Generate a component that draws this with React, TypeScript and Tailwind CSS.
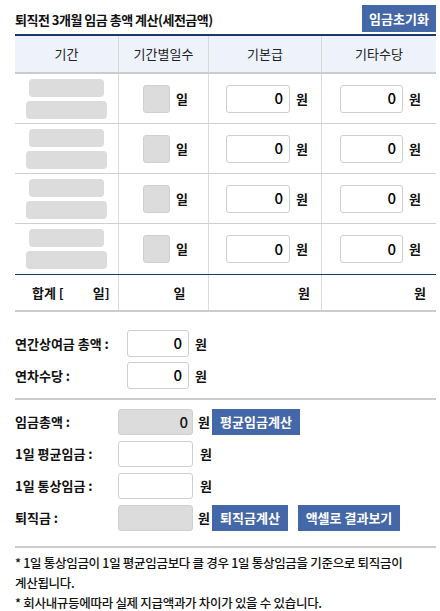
import React from "react";

const font = { fontFamily: '"Noto Sans CJK KR", "Noto Sans", sans-serif' };

function Btn({ children, w }: { children: React.ReactNode; w: string }) {
  return (
    <button
      className={`h-[26px] ${w} bg-[#4467a7] text-white text-[13px] font-bold flex items-center justify-center shrink-0`}
    >
      {children}
    </button>
  );
}

function MoneyInput({ w }: { w: string }) {
  return (
    <div
      className={`h-[28px] ${w} border border-[#cfcfcf] rounded-[3px] bg-white flex items-center justify-end pr-[6px] text-[15px] font-medium text-black`}
    >
      0
    </div>
  );
}

function Row({ last }: { last?: boolean }) {
  return (
    <div
      className={`grid grid-cols-[104px_90px_113px_114px] h-[50px] ${last ? "" : "border-b border-[#d0d0d0]"}`}
    >
      <div className="border-r border-[#dcdcdc] flex flex-col items-center justify-center gap-[4px]">
        <div className="w-[75px] h-[18px] rounded-[4px] bg-[#dcdcdc]" />
        <div className="w-[81px] h-[18px] rounded-[4px] bg-[#dcdcdc]" />
      </div>
      <div className="border-r border-[#dcdcdc] flex items-center pl-[24px] gap-[6px]">
        <div className="w-[27px] h-[28px] rounded-[3px] bg-[#dcdcdc] border border-[#d0d0d0]" />
        <span className="text-[13px] font-bold">일</span>
      </div>
      <div className="border-r border-[#dcdcdc] flex items-center pl-[17px] gap-[6px]">
        <MoneyInput w="w-[64px]" />
        <span className="text-[13px] font-bold">원</span>
      </div>
      <div className="flex items-center pl-[18px] gap-[6px]">
        <MoneyInput w="w-[63px]" />
        <span className="text-[13px] font-bold">원</span>
      </div>
    </div>
  );
}

export default function App() {
  return (
    <div className="w-[440px] h-[611px] bg-white pl-[15px] pr-[4px] text-[#111]" style={font}>
      <div className="flex items-start justify-between h-[34px] pt-[5px]">
        <div className="text-[13px] font-bold tracking-[-0.5px] mt-[5px]">퇴직전 3개월 임금 총액 계산(세전금액)</div>
        <Btn w="w-[74px] !h-[27px]">임금초기화</Btn>
      </div>
      <div className="border-t-2 border-[#1d3a66]">
        <div className="grid grid-cols-[104px_90px_113px_114px] h-[38px] bg-[#eef3fb] border-b-2 border-[#cccccc] text-[13px] text-[#222]">
          <div className="border-r border-[#d8d8d8] flex items-center justify-center">기간</div>
          <div className="border-r border-[#d8d8d8] flex items-center justify-center">기간별일수</div>
          <div className="border-r border-[#d8d8d8] flex items-center justify-center">기본급</div>
          <div className="flex items-center justify-center">기타수당</div>
        </div>
        <Row />
        <Row />
        <Row />
        <Row last />
        <div className="grid grid-cols-[104px_90px_113px_114px] h-[38px] border-t border-[#1d3a66] border-b-2 border-b-[#cccccc] text-[13px] font-bold">
          <div className="border-r border-[#dcdcdc] flex items-center pl-[17px]">
            <span>합계 [</span>
            <span className="ml-[29px]">일]</span>
          </div>
          <div className="border-r border-[#dcdcdc] flex items-center justify-center pl-[32px]">일</div>
          <div className="border-r border-[#dcdcdc] flex items-center justify-end pr-[11px]">원</div>
          <div className="flex items-center justify-end pr-[10px]">원</div>
        </div>
      </div>

      <div className="flex flex-col gap-[5px] mt-[18px] text-[13px] font-bold">
        <div className="flex items-center h-[27px]">
          <div className="w-[112px]">연간상여금 총액 :</div>
          <MoneyInput w="w-[62px] !h-[27px]" />
          <span className="ml-[6px]">원</span>
        </div>
        <div className="flex items-center h-[27px]">
          <div className="w-[112px]">연차수당 :</div>
          <MoneyInput w="w-[62px] !h-[27px]" />
          <span className="ml-[6px]">원</span>
        </div>
      </div>

      <div className="mt-[9px] border-t-2 border-[#cccccc]" />

      <div className="flex flex-col gap-[6px] mt-[9px] text-[13px] font-bold">
        <div className="flex items-center h-[26px]">
          <div className="w-[103px]">임금총액 :</div>
          <div className="w-[75px] h-[26px] rounded-[3px] bg-[#dcdcdc] border border-[#d0d0d0] flex items-center justify-end pr-[4px] text-[15px] font-medium">0</div>
          <span className="ml-[5px] mr-[2px]">원</span>
          <Btn w="w-[88px]">평균임금계산</Btn>
        </div>
        <div className="flex items-center h-[26px]">
          <div className="w-[103px]">1일 평균임금 :</div>
          <div className="w-[75px] h-[26px] rounded-[3px] bg-white border border-[#d0d0d0]" />
          <span className="ml-[7px]">원</span>
        </div>
        <div className="flex items-center h-[26px]">
          <div className="w-[103px]">1일 통상임금 :</div>
          <div className="w-[75px] h-[26px] rounded-[3px] bg-white border border-[#d0d0d0]" />
          <span className="ml-[7px]">원</span>
        </div>
        <div className="flex items-center h-[26px]">
          <div className="w-[103px]">퇴직금 :</div>
          <div className="w-[75px] h-[26px] rounded-[3px] bg-[#dcdcdc] border border-[#d0d0d0]" />
          <span className="ml-[5px] mr-[2px]">원</span>
          <Btn w="w-[76px]">퇴직금계산</Btn>
          <div className="w-[10px]" />
          <Btn w="w-[102px]">액셀로 결과보기</Btn>
        </div>
      </div>

      <div className="mt-[15px] border-t-2 border-[#cccccc]" />

      <div className="mt-[5px] text-[12.5px] font-medium leading-[20px] tracking-[-0.3px] pr-[20px]">
        <p>* 1일 통상임금이 1일 평균임금보다 클 경우 1일 통상임금을 기준으로 퇴직금이 계산됩니다.</p>
        <p>* 회사내규등에따라 실제 지급액과가 차이가 있을 수 있습니다.</p>
      </div>
    </div>
  );
}
